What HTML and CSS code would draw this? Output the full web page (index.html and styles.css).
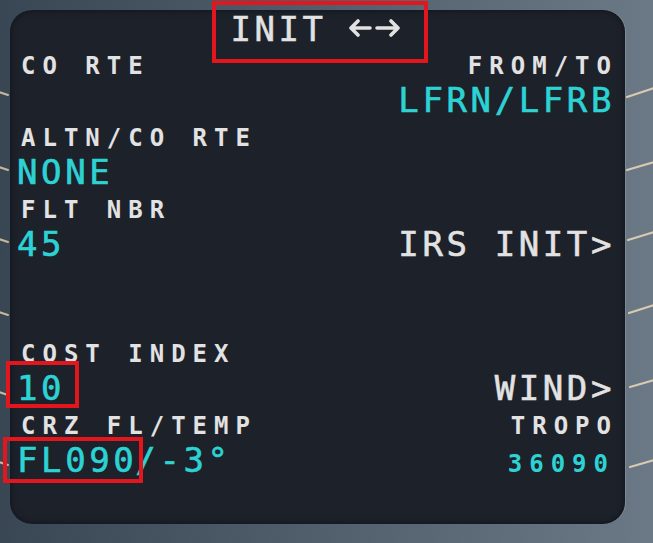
FILE: index.html
```html
<!DOCTYPE html>
<html>
<head>
    <meta charset="utf-8">
    <title>MCDU INIT</title>
    <link rel="stylesheet" href="styles.css">
</head>
<body>

<div class="unit">
    <div class="bezel bezel-left">
        <svg width="10" height="543" viewBox="0 0 10 543">
            <g stroke="#c9b79d" stroke-width="2" stroke-linecap="round">
                <line x1="-1" y1="92" x2="8" y2="95"/>
                <line x1="-1" y1="167" x2="8" y2="170"/>
                <line x1="-1" y1="239" x2="8" y2="242"/>
                <line x1="-1" y1="312" x2="8" y2="315"/>
                <line x1="-1" y1="392" x2="8" y2="395"/>
                <line x1="-1" y1="462" x2="8" y2="465"/>
            </g>
        </svg>
    </div>

    <div class="screen">
        <div class="title"><span class="white mark mark-title">INIT <svg class="arrows" width="54" height="18" viewBox="0 0 54 18">
            <g fill="none" stroke="#e2e2e2" stroke-width="3.6" stroke-linecap="round" stroke-linejoin="round">
                <path d="M3 9 H22 M10 2 L3 9 L10 16"/>
                <path d="M29 9 H50 M43 2 L50 9 L43 16"/>
            </g>
        </svg></span></div>

        <div class="pair">
            <div class="row lbl"><span>CO RTE</span><span>FROM/TO</span></div>
            <div class="row data"><span></span><span class="big cyan">LFRN/LFRB</span></div>
        </div>

        <div class="pair">
            <div class="row lbl"><span>ALTN/CO RTE</span><span></span></div>
            <div class="row data"><span class="big cyan">NONE</span><span></span></div>
        </div>

        <div class="pair">
            <div class="row lbl"><span>FLT NBR</span><span></span></div>
            <div class="row data"><span class="big cyan">45</span><span class="big white">IRS INIT&gt;</span></div>
        </div>

        <div class="pair">
            <div class="row lbl"><span></span><span></span></div>
            <div class="row data"><span></span><span></span></div>
        </div>

        <div class="pair">
            <div class="row lbl"><span>COST INDEX</span><span></span></div>
            <div class="row data"><span class="big cyan"><span class="mark mark-ci">10</span></span><span class="big white">WIND&gt;</span></div>
        </div>

        <div class="pair">
            <div class="row lbl"><span>CRZ FL/TEMP</span><span>TROPO</span></div>
            <div class="row data"><span class="big cyan"><span class="mark mark-fl">FL090</span>/-3°</span><span class="small cyan">36090</span></div>
        </div>

        <div class="scratchpad"></div>
    </div>

    <div class="bezel bezel-right">
        <svg width="28" height="543" viewBox="0 0 28 543">
            <g stroke="#dac9b0" stroke-width="2.2" stroke-linecap="round">
                <line x1="2" y1="97" x2="29" y2="88"/>
                <line x1="2" y1="170" x2="29" y2="162"/>
                <line x1="3" y1="240" x2="29" y2="232"/>
                <line x1="4" y1="313" x2="29" y2="305"/>
                <line x1="5" y1="387" x2="29" y2="380"/>
                <line x1="5" y1="467" x2="29" y2="460"/>
            </g>
        </svg>
    </div>
</div>

</body>
</html>
```

FILE: styles.css
```css
/* MCDU init page */
body {
    margin: 0;
    background: linear-gradient(90deg, #394654 0%, #4f5d6b 45%, #6a7985 100%);
    font-family: "DejaVu Sans Mono", "Liberation Mono", monospace;
    overflow: hidden;
}

.unit {
    display: flex;
    height: 543px;
}

.bezel {
    flex: none;
}

.bezel-left {
    width: 10px;
}

.bezel-right {
    width: 28px;
}

.bezel svg {
    display: block;
}

.screen {
    flex: none;
    width: 615px;
    height: 514px;
    margin-top: 10px;
    padding: 0 12px 0 10px;
    box-sizing: border-box;
    background: #1d212a;
    border-radius: 22px;
    box-shadow: 1px 0 0 #7c8994, inset 0 0 6px rgba(0, 0, 0, 0.5);
    color: #e2e2e2;
}

.title {
    height: 38px;
    line-height: 38px;
    text-align: center;
    font-size: 34px;
    letter-spacing: 3.5px;
    -webkit-text-stroke: 0.5px currentColor;
}

.arrows {
    vertical-align: 4px;
    margin-left: -2px;
}

.pair {
    height: 72px;
}

.row {
    display: flex;
    justify-content: space-between;
    align-items: baseline;
}

.row.lbl {
    height: 36px;
    box-sizing: border-box;
    padding-top: 6px;
    line-height: 24px;
    font-size: 24px;
    font-weight: bold;
    letter-spacing: 7px;
}

.row.lbl span:last-child {
    margin-right: -5px;
}

.row.lbl span:first-child {
    margin-left: 1px;
}

.row.data {
    height: 36px;
    box-sizing: border-box;
    padding-top: 1px;
    line-height: 30px;
}

.big {
    font-size: 34px;
    letter-spacing: 3.6px;
    -webkit-text-stroke: 0.6px currentColor;
}

.row.data .big:first-child {
    margin-left: -3px;
}

.row.data span:last-child {
    margin-right: -2px;
}

.small {
    font-size: 24px;
    font-weight: bold;
    letter-spacing: 7px;
    margin-right: -5px;
}

.cyan {
    color: #2dd3d4;
}

.white {
    color: #e2e2e2;
}

/* red highlight frames */
.mark {
    position: relative;
}

.mark::after {
    content: "";
    position: absolute;
    border: 4px solid #e3161d;
    -webkit-text-stroke: 0;
}

.mark-title::after {
    top: -8px;
    bottom: -14px;
    left: -19px;
    right: -26px;
}

.mark-ci::after {
    top: -7px;
    bottom: 0;
    left: -11px;
    right: -14px;
}

.mark-fl::after {
    top: -3px;
    bottom: -3px;
    left: -14px;
    right: -6px;
}
```
